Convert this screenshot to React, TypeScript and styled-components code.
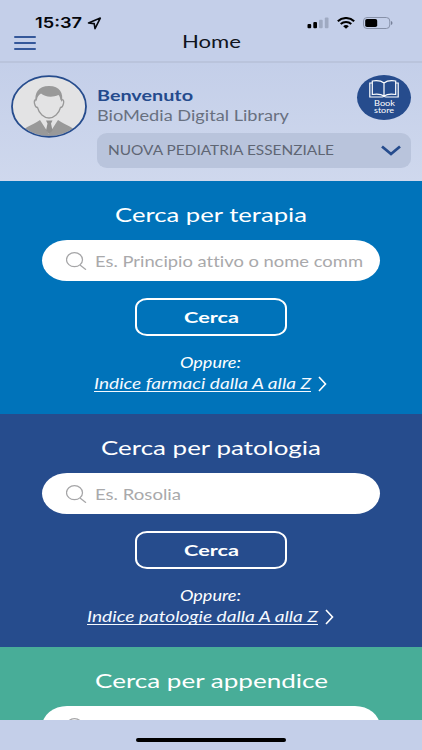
import React, { useLayoutEffect, useRef } from 'react';
import styled, { createGlobalStyle } from 'styled-components';

const GlobalStyle = createGlobalStyle`
  * { box-sizing: border-box; }
  html, body { margin: 0; padding: 0; }
  body {
    font-family: Lato, "Open Sans", sans-serif;
    font-variant-ligatures: none;
    background: #c4cfe9;
  }
`;

const FitBox = styled.span<{ $width: number }>`
  display: block;
  flex: none;
  width: ${(p) => p.$width}px;
  text-align: left;
`;

const FitInner = styled.span`
  display: inline-block;
  vertical-align: top;
  white-space: nowrap;
  transform-origin: left center;
`;

/* A single line of text, widened to span exactly `width` pixels. */
function FitText({ width, children }: { width: number; children: React.ReactNode }) {
  const ref = useRef<HTMLSpanElement>(null);
  useLayoutEffect(() => {
    const el = ref.current;
    if (!el) return;
    const fit = () => {
      el.style.transform = 'none';
      const natural = el.getBoundingClientRect().width;
      if (natural) el.style.transform = `scaleX(${width / natural})`;
    };
    fit();
    document.fonts?.ready.then(fit);
  }, [width]);
  return (
    <FitBox $width={width}>
      <FitInner ref={ref}>{children}</FitInner>
    </FitBox>
  );
}

const Screen = styled.div`
  display: flex;
  flex-direction: column;
  width: 422px;
  height: 750px;
  overflow: hidden;
  background: #c4cfe9;
`;

const Header = styled.header`
  flex: none;
  height: 63px;
  border-bottom: 2px solid #bac4dc;
`;

const StatusBar = styled.div`
  display: flex;
  align-items: center;
  height: 30px;
  padding: 16px 29px 0 35px;
  color: #05070c;
  font: 600 15px/16px Inter, sans-serif;
  svg { display: block; flex: none; }
`;

const StatusIcons = styled.div`
  display: flex;
  align-items: center;
  gap: 8px;
  margin-left: auto;
`;

const LocationIcon = styled.svg`
  margin-left: 5px;
`;

const NavBar = styled.nav`
  display: grid;
  grid-template-columns: 60px 1fr 60px;
  height: 31px;
  justify-items: center;
`;

const MenuButton = styled.button`
  justify-self: start;
  display: flex;
  flex-direction: column;
  gap: 4px;
  margin: 6px 0 0 14px;
  padding: 0;
  border: 0;
  background: none;
  height: 14px;
`;

const MenuLine = styled.span`
  width: 22px;
  height: 2px;
  border-radius: 1px;
  background: #35589a;
`;

const PageTitle = styled.h1`
  margin: 1px 0 0;
  color: #101420;
  font-size: 17px;
  font-weight: 400;
  line-height: 22px;
`;

const Profile = styled.section`
  display: flex;
  flex: none;
  height: 118px;
  padding: 12px 11px 0;
  background: linear-gradient(#c4cfe9, #cfd8ed);
`;

const Avatar = styled.svg`
  display: block;
  flex: none;
  margin-right: 10px;
`;

const ProfileBody = styled.div`
  flex: 1;
`;

const ProfileTop = styled.div`
  display: flex;
  justify-content: space-between;
  height: 58px;
`;

const Names = styled.div`
  padding-top: 10px;
`;

const Welcome = styled.div`
  color: #244a8d;
  font-size: 15.5px;
  font-weight: 700;
  line-height: 20px;
`;

const Library = styled.div`
  color: #687080;
  font-size: 15.5px;
  line-height: 20px;
`;

const StoreButton = styled.button`
  display: flex;
  flex-direction: column;
  align-items: center;
  width: 54px;
  height: 45px;
  padding: 5px 0 0;
  border: 0;
  border-radius: 50%;
  background: #264c8d;
  color: #fff;
  font: 400 7.5px/7.5px Lato, sans-serif;
  svg { display: block; margin-bottom: 1.5px; }
`;

const Picker = styled.div`
  display: flex;
  align-items: center;
  justify-content: space-between;
  height: 35px;
  padding: 0 10px 1px 11px;
  border-radius: 10px / 9px;
  background: #b9c4dc;
  color: #5f6674;
  font-size: 13px;
  line-height: 18px;
`;

const Panel = styled.section<{ $color: string; $clip?: boolean }>`
  display: flex;
  flex: none;
  flex-direction: column;
  align-items: center;
  height: ${(p) => (p.$clip ? 72.5 : 233)}px;
  overflow: hidden;
  padding-top: 20px;
  background: ${(p) => p.$color};
  color: #fff;
`;

const PanelTitle = styled.h2`
  margin: 0 0 13px;
  font-size: 20px;
  font-weight: 400;
  line-height: 26px;
`;

const SearchField = styled.div`
  display: flex;
  flex: none;
  align-items: center;
  width: 338px;
  height: 41px;
  padding-left: 24px;
  border-radius: 25px / 20.5px;
  background: #fff;
  color: #a9a9ab;
  font-size: 15px;
  line-height: 20px;
  svg { flex: none; margin-right: 8px; }
`;

const SearchButton = styled.button`
  display: flex;
  flex: none;
  align-items: center;
  justify-content: center;
  width: 152px;
  height: 38px;
  margin-top: 17px;
  padding: 0 0 1px;
  border: 2px solid #fff;
  border-radius: 12px / 10px;
  background: none;
  color: #fff;
  font: 700 16px/20px Lato, sans-serif;
`;

const Or = styled.div`
  margin: 16px 2px 0 0;
  font-size: 15px;
  font-style: italic;
  line-height: 21px;
`;

const IndexLink = styled.a`
  display: flex;
  align-items: center;
  gap: 7px;
  margin-right: 1px;
  color: #f4f9ff;
  font-size: 15px;
  font-style: italic;
  line-height: 21px;
  text-decoration: none;
`;

const Underlined = styled.span`
  text-decoration: underline;
  text-decoration-thickness: 1px;
  text-underline-offset: 1.5px;
  text-decoration-skip-ink: none;
`;

const Footer = styled.footer`
  display: flex;
  flex: 1;
  justify-content: center;
  padding-top: 18px;
  background: #c4cfe9;
`;

const HomeIndicator = styled.span`
  width: 150px;
  height: 4.5px;
  border-radius: 3px;
  background: #000;
`;

function SearchIcon() {
  return (
    <svg width="21" height="18" viewBox="0 0 21 18" fill="none" stroke="#a5a5a7" strokeWidth="1.25">
      <ellipse cx="8.5" cy="7.7" rx="8" ry="7" />
      <path d="M14 13l6 4.7" />
    </svg>
  );
}

interface PanelData {
  color: string;
  title: string;
  titleWidth: number;
  hint?: string;
  hintWidth?: number;
  link?: string;
  linkWidth?: number;
}

const panels: PanelData[] = [
  {
    color: '#0073ba',
    title: 'Cerca per terapia',
    titleWidth: 192,
    hint: 'Es. Principio attivo o nome comm',
    hintWidth: 268,
    link: 'Indice farmaci dalla A alla Z',
    linkWidth: 217,
  },
  {
    color: '#264c8d',
    title: 'Cerca per patologia',
    titleWidth: 220,
    hint: 'Es. Rosolia',
    hintWidth: 86,
    link: 'Indice patologie dalla A alla Z',
    linkWidth: 231,
  },
  { color: '#48ad98', title: 'Cerca per appendice', titleWidth: 233 },
];

function SearchPanel({ data }: { data: PanelData }) {
  return (
    <Panel $color={data.color} $clip={!data.link}>
      <PanelTitle>
        <FitText width={data.titleWidth}>{data.title}</FitText>
      </PanelTitle>
      <SearchField>
        <SearchIcon />
        {data.hint && <FitText width={data.hintWidth!}>{data.hint}</FitText>}
      </SearchField>
      {data.link && (
        <>
          <SearchButton>
            <FitText width={55}>Cerca</FitText>
          </SearchButton>
          <Or>
            <FitText width={61}>Oppure:</FitText>
          </Or>
          <IndexLink>
            <FitText width={data.linkWidth!}>
              <Underlined>{data.link}</Underlined>
            </FitText>
            <svg width="9" height="16" viewBox="0 0 9 16" fill="none" stroke="#fff" strokeWidth="1.6">
              <path d="M1 1l6.500 7L1 15" />
            </svg>
          </IndexLink>
        </>
      )}
    </Panel>
  );
}

export default function App() {
  return (
    <>
      <GlobalStyle />
      <Screen>
        <Header>
          <StatusBar>
            <FitText width={47}>15:37</FitText>
            <LocationIcon width="15" height="13" viewBox="0 0 15 13">
              <path
                d="M13.3 1.1L1.5 6l5.7.6.8 5z"
                fill="none"
                stroke="#05070c"
                strokeWidth="1.6"
                strokeLinejoin="round"
              />
            </LocationIcon>
            <StatusIcons>
              <svg width="22" height="12" viewBox="0 0 22 12">
                <rect x="0.5" y="7" width="3.7" height="4.3" rx="1" />
                <rect x="6.3" y="5" width="3.7" height="6.3" rx="1" />
                <rect x="12" y="2.8" width="3.7" height="8.5" rx="1" fill="#9faac2" />
                <rect x="17.8" y="0.4" width="3.7" height="10.9" rx="1" fill="#9faac2" />
              </svg>
              <svg width="18" height="12" viewBox="0 0 18 12" fill="none" stroke="#000" strokeWidth="2">
                <path d="M.8 4.2C5.4-.1 12.6-.1 17.2 4.2M3.7 6.9c3-2.7 7.6-2.7 10.6 0" />
                <path d="M6.2 9.2c1.6-1.5 4-1.5 5.6 0L9 11.7z" fill="#000" stroke="none" />
              </svg>
              <svg width="30" height="12" viewBox="0 0 30 12">
                <rect x="0.5" y="0.5" width="26.3" height="11" rx="3.5" fill="none" stroke="#8791a8" />
                <rect x="2.2" y="2" width="12" height="8" rx="1.8" />
                <path d="M28 4c2 .7 2 3.3 0 4z" fill="#778199" />
              </svg>
            </StatusIcons>
          </StatusBar>
          <NavBar>
            <MenuButton aria-label="Menu">
              <MenuLine />
              <MenuLine />
              <MenuLine />
            </MenuButton>
            <PageTitle>
              <FitText width={59}>Home</FitText>
            </PageTitle>
          </NavBar>
        </Header>

        <Profile>
          <Avatar width="76" height="63" viewBox="0 0 76 63">
            <defs>
              <clipPath id="avatar-clip">
                <ellipse cx="38" cy="31.5" rx="36" ry="29.5" />
              </clipPath>
            </defs>
            <ellipse cx="38" cy="31.5" rx="37" ry="30.5" fill="#e3e3e4" />
            <g clipPath="url(#avatar-clip)">
              <path d="M6 63C11 52 20 51.500 29 45l9 14 9-14c9 6.500 18 7 23 18z" fill="#999" />
              <path
                d="M25.500 25c-2-1-2.600 1-2 3.500.6 2.500 1.500 4 3 4C28 38.500 33 43 38 43s10-4.500 11.500-10.500c1.500 0 2.400-1.500 3-4s0-4.500-2-3.500"
                fill="#e3e3e4"
                stroke="#999"
                strokeWidth="1.300"
              />
              <path
                d="M24.500 27c-1-9 2.500-16 13.500-16s14.500 7 13 16l-1.700-2.500c-.2-2-.8-3.500-1.800-4.500-7 3-14 1.500-17.500-1.500-2.500 1.500-3.800 3.500-4 6z"
                fill="#999"
              />
              <path d="M35 45.500h6.500l-1.500 3 1.500 7-3.300 3.500-3.200-3.500 1.500-7z" fill="#8f8f8f" />
            </g>
            <ellipse cx="38" cy="31.5" rx="37" ry="30.3" fill="none" stroke="#264c8d" strokeWidth="1.8" />
          </Avatar>
          <ProfileBody>
            <ProfileTop>
              <Names>
                <Welcome>
                  <FitText width={96}>Benvenuto</FitText>
                </Welcome>
                <Library>
                  <FitText width={192}>BioMedia Digital Library</FitText>
                </Library>
              </Names>
              <StoreButton>
                <svg width="30" height="18" viewBox="0 0 30 18" fill="none" stroke="#fff" strokeWidth="1.2">
                  <path d="M15 3C12 .5 8 .3 3.300 1v13.500C8 13.700 12 14 15 16c3-2 7-2.300 11.700-1.500V1C22 .3 18 .5 15 3zM15 3v13" />
                  <path d="M3.300 3H.8v14H13q2-1 4 0h12.200V3h-2.500" />
                </svg>
                <FitText width={21}>Book</FitText>
                <FitText width={20}>store</FitText>
              </StoreButton>
            </ProfileTop>
            <Picker>
              <FitText width={226}>NUOVA PEDIATRIA ESSENZIALE</FitText>
              <svg width="20" height="11" viewBox="0 0 20 11" fill="none" stroke="#264c8d" strokeWidth="2.8">
                <path d="M1 1.500l9 7.500 9-7.500" />
              </svg>
            </Picker>
          </ProfileBody>
        </Profile>

        {panels.map((panel) => (
          <SearchPanel key={panel.title} data={panel} />
        ))}

        <Footer>
          <HomeIndicator />
        </Footer>
      </Screen>
    </>
  );
}
